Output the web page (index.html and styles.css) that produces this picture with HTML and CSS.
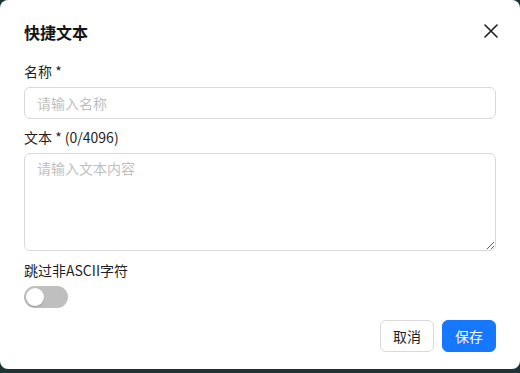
FILE: index.html
```html
<!DOCTYPE html>
<html lang="zh-CN">
<head>
<meta charset="UTF-8">
<meta name="viewport" content="width=device-width, initial-scale=1.0">
<title>快捷文本</title>
<link rel="stylesheet" href="styles.css">
</head>
<body>
<div class="dialog">
    <div class="dialog-header">
        <h2 class="dialog-title">快捷文本</h2>
        <button class="close-btn" aria-label="关闭">
            <svg width="14" height="14" viewBox="0 0 14 14">
                <path d="M1 1 L13 13 M13 1 L1 13" stroke="#1f1f1f" stroke-width="1.6" stroke-linecap="round"/>
            </svg>
        </button>
    </div>
    <div class="form">
        <label class="field-label" for="name">名称 *</label>
        <input class="text-input" id="name" type="text" placeholder="请输入名称">

        <label class="field-label label-gap" for="content">文本 * (0/4096)</label>
        <textarea class="text-area" id="content" placeholder="请输入文本内容"></textarea>

        <div class="field-label label-gap-lg">跳过非ASCII字符</div>
        <div class="switch"><span class="switch-knob"></span></div>
    </div>
    <div class="dialog-footer">
        <button class="btn">取消</button>
        <button class="btn btn-primary">保存</button>
    </div>
</div>
</body>
</html>
```

FILE: styles.css
```css
html, body {
    margin: 0;
    padding: 0;
}
body {
    font-family: "Noto Sans CJK SC", "Noto Sans", sans-serif;
    font-size: 14px;
    color: #1f1f1f;
    background-color: #1b3436;
    height: 373px;
    overflow: hidden;
}
.dialog {
    background-color: #fff;
    width: 520px;
    height: 369px;
    box-sizing: border-box;
    border-radius: 8px;
    padding: 20px 24px 17px;
    display: flex;
    flex-direction: column;
}
.dialog-header {
    display: flex;
    justify-content: space-between;
    align-items: center;
    height: 24px;
}
.dialog-title {
    margin: 0;
    font-size: 16px;
    font-weight: 700;
    line-height: 24px;
    color: #141414;
}
.close-btn {
    border: none;
    background: none;
    padding: 0;
    margin-right: -2px;
    margin-top: -2px;
    width: 14px;
    height: 14px;
    display: flex;
    cursor: pointer;
}
.form {
    display: flex;
    flex-direction: column;
    margin-top: 16px;
}
.field-label {
    line-height: 22px;
    margin-bottom: 5px;
}
.label-gap {
    margin-top: 7px;
}
.label-gap-lg {
    margin-top: 8px;
}
.text-input,
.text-area {
    font-family: inherit;
    font-size: 14px;
    border: 1px solid #d9d9d9;
    border-radius: 6px;
    padding: 4px 12px;
    width: 472px;
    box-sizing: border-box;
    outline: none;
    color: #1f1f1f;
}
.text-input {
    height: 32px;
}
.text-area {
    height: 98px;
    line-height: 22px;
    padding-top: 3px;
    resize: vertical;
}
.text-input::placeholder,
.text-area::placeholder {
    color: #bfbfbf;
}
.switch {
    width: 44px;
    height: 22px;
    border-radius: 11px;
    background-color: #bfbfbf;
    box-sizing: border-box;
    padding: 2px;
}
.switch-knob {
    display: block;
    width: 18px;
    height: 18px;
    border-radius: 50%;
    background-color: #fff;
    box-shadow: 0 1px 2px rgba(0, 35, 11, 0.2);
}
.dialog-footer {
    display: flex;
    justify-content: flex-end;
    gap: 8px;
    margin-top: 12px;
}
.btn {
    font-family: inherit;
    font-size: 14px;
    height: 32px;
    width: 54px;
    padding: 0;
    border: 1px solid #d9d9d9;
    border-radius: 6px;
    background-color: #fff;
    color: #1f1f1f;
    cursor: pointer;
}
.btn-primary {
    background-color: #1677ff;
    border-color: #1677ff;
    color: #fff;
}
```
